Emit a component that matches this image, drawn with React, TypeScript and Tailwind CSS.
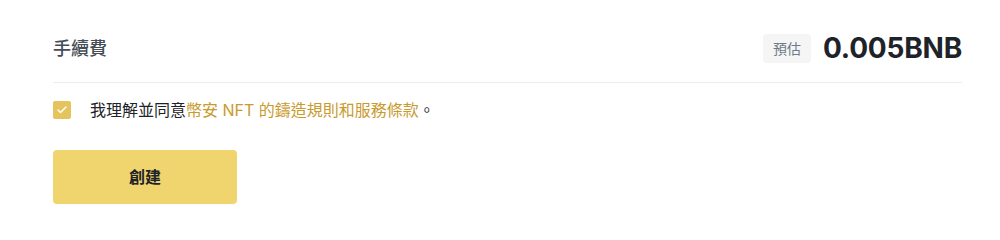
import { Check } from "lucide-react";

const App = () => {
  return (
    <div
      className="w-[1000px] h-[238px] bg-white"
      style={{ fontFamily: "Inter, 'Noto Sans CJK TC', sans-serif" }}
    >
      <div className="ml-[53px] mr-[38px] pt-[26px]">
        {/* Fee row */}
        <div className="flex items-center justify-between h-[44px] border-b border-[#eaecef] pb-[12px] box-content">
          <span className="text-[18px] font-medium text-[#474d57]">手續費</span>
          <div className="flex items-center gap-[12px]">
            <span className="px-[10px] h-[29px] flex items-center rounded-[4px] bg-[#f5f5f5] text-[14px] text-[#707a8a]">
              預估
            </span>
            <span className="text-[28px] font-bold text-[#1e2329] tracking-[-0.2px]">0.005BNB</span>
          </div>
        </div>

        {/* Agreement */}
        <label className="flex items-center mt-[15px] gap-[19px] text-[16px] text-[#1e2329]">
          <span className="w-[18px] h-[18px] rounded-[2px] bg-[#e5c35d] flex items-center justify-center">
            <Check className="w-[12px] h-[12px] text-white" strokeWidth={3} />
          </span>
          <span>
            我理解並同意<span className="text-[#c99a2e]">幣安 NFT 的鑄造規則和服務條款</span>。
          </span>
        </label>

        {/* Button */}
        <button className="mt-[28px] w-[184px] h-[54px] rounded-[4px] bg-[#f0d56e] text-[16px] font-semibold text-[#1e2329]">
          創建
        </button>
      </div>
    </div>
  );
};

export default App;
